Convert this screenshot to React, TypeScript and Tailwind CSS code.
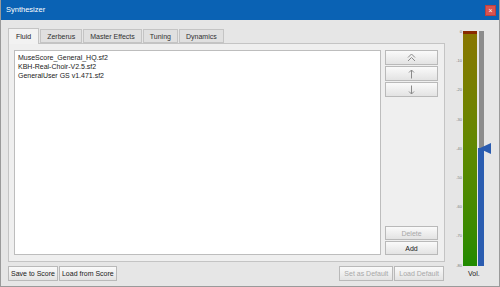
import React from "react";

const tabs = ["Fluid", "Zerberus", "Master Effects", "Tuning", "Dynamics"];
const files = ["MuseScore_General_HQ.sf2", "KBH-Real-Choir-V2.5.sf2", "GeneralUser GS v1.471.sf2"];
const ticks = ["0", "-10", "-20", "-30", "-40", "-50", "-60", "-70", "-80"];

function Btn({ children, disabled, className = "" }: { children: React.ReactNode; disabled?: boolean; className?: string }) {
  return (
    <div
      className={
        "flex items-center justify-center border border-[#b9b9b9] bg-gradient-to-b from-[#fafafa] to-[#e3e3e3] text-[7px] leading-none " +
        (disabled ? "text-[#a8a8a8] " : "text-[#202020] ") +
        className
      }
    >
      {children}
    </div>
  );
}

export default function App() {
  return (
    <div
      className="w-[500px] h-[287px] bg-[#e6e6e6] flex flex-col overflow-hidden border-x border-b border-[#9a9a9a]"
      style={{ fontFamily: '"Liberation Sans", Arial, sans-serif' }}
    >
      <div className="h-[20px] bg-[#0a62b4] flex items-center justify-between pl-[5px] pr-[3px] shrink-0">
        <span className="text-white text-[7.5px]">Synthesizer</span>
        <div className="w-[11px] h-[11px] bg-[#d9534f] border border-[#b84040] flex items-center justify-center text-white text-[7px] leading-none">
          ×
        </div>
      </div>
      <div className="flex flex-1">
        <div className="flex flex-col pl-[7px] pt-[7px] w-[444px]">
          <div className="flex items-end h-[16px] gap-[1px]">
            {tabs.map((t, i) => (
              <div
                key={t}
                className={
                  "text-[7px] leading-none flex items-center border border-[#c4c4c4] " +
                  (i === 0
                    ? "h-[16px] px-[7px] bg-[#f2f2f2] border-b-0 text-[#202020] relative z-10 -mb-[1px]"
                    : "h-[14px] px-[6px] bg-[#e0e0e0] text-[#303030]")
                }
              >
                {t}
              </div>
            ))}
          </div>
          <div className="h-[219px] border border-[#c4c4c4] bg-[#efefef] flex pl-[5px] pr-[6px] pt-[6px] pb-[6px] gap-[4px]">
            <div className="flex-1 bg-white border border-[#bdbdbd] pl-[3px] pt-[2px] text-[7px] leading-[9px] text-[#1a1a1a]">
              {files.map((f) => (
                <div key={f}>{f}</div>
              ))}
            </div>
            <div className="w-[53px] flex flex-col justify-between">
              <div className="flex flex-col gap-[1px]">
                <Btn className="h-[15px] text-[#909090]">
                  <svg width="9" height="9" viewBox="0 0 9 9" fill="none" stroke="#8a8a8a" strokeWidth="1">
                    <path d="M1 4.5 L4.5 1 L8 4.5 M1 8 L4.5 4.5 L8 8" />
                  </svg>
                </Btn>
                <Btn className="h-[15px]">
                  <svg width="7" height="10" viewBox="0 0 7 10" fill="none" stroke="#8a8a8a" strokeWidth="1">
                    <path d="M3.5 9.5 V1 M1 3.5 L3.5 1 L6 3.5" />
                  </svg>
                </Btn>
                <Btn className="h-[15px]">
                  <svg width="7" height="10" viewBox="0 0 7 10" fill="none" stroke="#8a8a8a" strokeWidth="1">
                    <path d="M3.5 0.5 V9 M1 6.5 L3.5 9 L6 6.5" />
                  </svg>
                </Btn>
              </div>
              <div className="flex flex-col gap-[1px]">
                <Btn disabled className="h-[14px]">Delete</Btn>
                <Btn className="h-[14px]">Add</Btn>
              </div>
            </div>
          </div>
          <div className="flex justify-between mt-[4px] pr-[1px]">
            <div className="flex gap-[1px]">
              <Btn className="h-[15px] px-[2px]">Save to Score</Btn>
              <Btn className="h-[15px] px-[2px]">Load from Score</Btn>
            </div>
            <div className="flex gap-[1px]">
              <Btn disabled className="h-[15px] px-[4px]">Set as Default</Btn>
              <Btn disabled className="h-[15px] px-[4px]">Load Default</Btn>
            </div>
          </div>
        </div>
        <div className="flex-1 flex flex-col items-start pl-[9px] pt-[11px]">
          <div className="flex">
            <div className="relative w-[9px] h-[235px]">
              {ticks.map((t, i) => (
                <div
                  key={t}
                  className="absolute right-[1px] text-[4px] leading-none text-[#7a7a7a]"
                  style={{ top: i * 29.2 - 1 }}
                >
                  {t}
                </div>
              ))}
            </div>
            <div className="w-[14px] h-[235px] flex flex-col">
              <div className="h-[3px] bg-[#8a2a00]" />
              <div className="flex-1 bg-gradient-to-b from-[#887600] via-[#5f8900] to-[#1f8a00]" />
            </div>
            <div className="relative w-[6px] h-[235px] ml-[1px] flex flex-col">
              <div className="h-[117px] bg-[#8c8c8c] mx-[0.5px]" />
              <div className="flex-1 bg-[#2a5cb0]" />
              <svg className="absolute left-[1px] top-[112px]" width="12" height="11" viewBox="0 0 12 11">
                <path d="M0 5.5 L12 0 L12 11 Z" fill="#2a5cb0" />
              </svg>
            </div>
          </div>
          <div className="text-[7px] leading-none text-[#202020] mt-[4px] ml-[14px]">Vol.</div>
        </div>
      </div>
    </div>
  );
}
